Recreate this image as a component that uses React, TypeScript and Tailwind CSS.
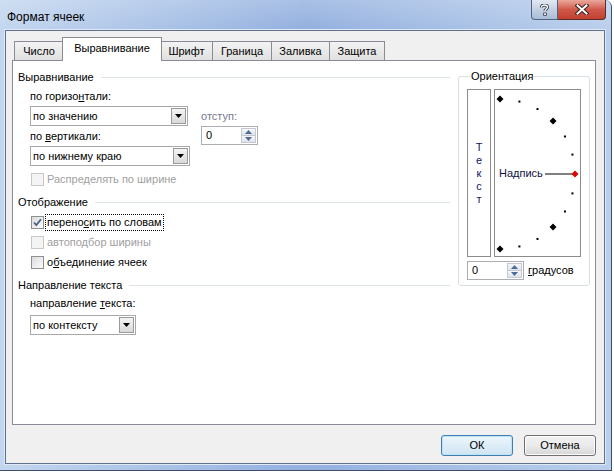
import React from 'react'

function Select({ value, className }: { value: string; className: string }) {
  return (
    <div className={`flex h-[20px] items-stretch border border-[#a9a9a9] bg-white ${className}`}>
      <div className="flex flex-1 items-center pl-[2px] leading-none">{value}</div>
      <div className="m-[1px] flex w-[15px] items-center justify-center border border-[#9a9a9a] bg-gradient-to-b from-[#f4f4f4] to-[#d9d9d9]">
        <svg width="7" height="4" viewBox="0 0 7 4">
          <path d="M0 0h7L3.5 4z" fill="#000" />
        </svg>
      </div>
    </div>
  )
}

function Spin({ value }: { value: string }) {
  return (
    <div className="flex h-[19px] w-[57px] items-stretch border border-[#abadb3] bg-white">
      <div className="flex flex-1 items-center pl-[4px] leading-none">{value}</div>
      <div className="m-[1px] flex w-[15px] flex-col">
        <div className="flex flex-1 items-center justify-center border border-[#c3c8d1] bg-gradient-to-b from-[#f6f7f9] to-[#dfe3ea]">
          <svg width="7" height="4" viewBox="0 0 7 4">
            <path d="M0 4h7L3.5 0z" fill="#4d6a9c" />
          </svg>
        </div>
        <div className="flex flex-1 items-center justify-center border border-t-0 border-[#c3c8d1] bg-gradient-to-b from-[#f6f7f9] to-[#dfe3ea]">
          <svg width="7" height="4" viewBox="0 0 7 4">
            <path d="M0 0h7L3.5 4z" fill="#4d6a9c" />
          </svg>
        </div>
      </div>
    </div>
  )
}

function Check({
  checked,
  disabled,
  focus,
  children,
}: {
  checked?: boolean
  disabled?: boolean
  focus?: boolean
  children: React.ReactNode
}) {
  return (
    <div className="flex h-[20px] items-center pl-[13px]">
      <div
        className={`flex h-[13px] w-[13px] items-center justify-center border ${
          disabled
            ? 'border-[#c8c8c8] bg-[#f4f4f4]'
            : 'border-[#8e8f8f] bg-gradient-to-br from-[#dcdcdc] to-[#fbfbfb]'
        }`}
      >
        {checked && (
          <svg width="9" height="9" viewBox="0 0 9 9">
            <path d="M1 4.5l2.3 2.6L8 1.2" fill="none" stroke="#4a5f8e" strokeWidth="1.8" />
          </svg>
        )}
      </div>
      <div
        className={`ml-[1px] px-[1px] leading-[15px] ${disabled ? 'text-[#a0a0a0]' : 'text-black'} ${
          focus ? 'border border-dotted border-black' : 'border border-transparent'
        }`}
      >
        {children}
      </div>
    </div>
  )
}

function Header({ children }: { children: React.ReactNode }) {
  return (
    <div className="flex h-[18px] items-center pr-[8px]">
      <span>{children}</span>
      <div className="ml-[7px] h-px flex-1 bg-[#dde3ea]" />
    </div>
  )
}

const tabs = ['Число', 'Выравнивание', 'Шрифт', 'Граница', 'Заливка', 'Защита']
const tabWidths = ['w-[50px]', 'w-[100px]', 'w-[53px]', 'w-[60px]', 'w-[59px]', 'w-[56px]']

function Dial() {
  const cx = 5
  const cy = 84
  const r = 75
  const marks = [90, 75, 60, 45, 30, 15, 0, -15, -30, -45, -60, -75, -90]
  return (
    <svg className="absolute inset-0" width="85" height="166" viewBox="0 0 85 166">
      <line x1="50" y1={cy} x2="79" y2={cy} stroke="#000" strokeWidth="1" />
      {marks.map((a) => {
        const x = cx + r * Math.cos((a * Math.PI) / 180)
        const y = cy - r * Math.sin((a * Math.PI) / 180)
        if (a % 45 === 0) {
          const d = 3.5
          return (
            <path
              key={a}
              d={`M${x} ${y - d}L${x + d} ${y}L${x} ${y + d}L${x - d} ${y}Z`}
              fill={a === 0 ? '#e00000' : '#000'}
            />
          )
        }
        return <rect key={a} x={x - 1} y={y - 1} width="2" height="2" fill="#000" />
      })}
    </svg>
  )
}

export default function App() {
  return (
    <div className="h-[472px] w-[614px] overflow-hidden bg-white font-['Liberation_Sans',Arial,sans-serif] text-[11px] text-black">
      <div className="flex h-[471px] w-[612px] flex-col rounded-tr-[7px] border-r border-b border-[#3f4d66] bg-gradient-to-r from-[#c3d6ef] via-[#93b0df] to-[#bacfec]">
        {/* title bar */}
        <div className="flex h-[30px] items-start bg-gradient-to-b from-white/20 to-transparent">
          <div className="pl-[7px] pt-[10px] text-[12px] leading-[15px]">Формат ячеек</div>
          <div className="ml-auto mr-[5px] flex h-[20px]">
            <div className="flex w-[27px] items-center justify-center rounded-bl-[4px] border border-t-0 border-[#50637f] bg-gradient-to-b from-[#e2e9f3] via-[#c4d1e3] to-[#a9bcd6]">
              <svg width="9" height="12" viewBox="0 0 9 12">
                <path
                  d="M1.5 3.5C1.5 1.5 3 1 4.5 1S7.5 1.8 7.5 3.3 5 5.3 5 7"
                  fill="none"
                  stroke="#334"
                  strokeWidth="3"
                />
                <path
                  d="M1.5 3.5C1.5 1.5 3 1 4.5 1S7.5 1.8 7.5 3.3 5 5.3 5 7"
                  fill="none"
                  stroke="#fff"
                  strokeWidth="1.4"
                />
                <rect x="3.3" y="8.6" width="3.4" height="3.2" fill="#334" />
                <rect x="4.1" y="9.3" width="1.8" height="1.8" fill="#fff" />
              </svg>
            </div>
            <div className="flex w-[48px] items-center justify-center rounded-br-[4px] border border-t-0 border-l-0 border-[#5a2d2a] bg-gradient-to-b from-[#e9a99c] via-[#d0584a] to-[#c1402f]">
              <svg width="14" height="11" viewBox="0 0 14 11">
                <path d="M2.5 1.5l9 8M11.5 1.5l-9 8" stroke="#3a2020" strokeWidth="4" strokeLinecap="square" />
                <path d="M2.5 1.5l9 8M11.5 1.5l-9 8" stroke="#fff" strokeWidth="2" strokeLinecap="square" />
              </svg>
            </div>
          </div>
        </div>

        {/* client area */}
        <div className="mb-[6px] ml-[5px] mr-[6px] flex flex-1 flex-col border border-[#61718b] bg-[#f0f0f0] pt-[6px] shadow-[0_0_0_1px_#dfe8f5]">
          {/* tabs */}
          <div className="ml-[8px] flex h-[23px] items-end">
            {tabs.map((t, i) =>
              i === 1 ? (
                <div
                  key={t}
                  className={`relative z-10 -mx-[2px] -mb-px flex h-[24px] items-center justify-center border border-b-0 border-[#898c95] bg-white pb-[3px] ${tabWidths[i]}`}
                >
                  {t}
                </div>
              ) : (
                <div
                  key={t}
                  className={`flex h-[19px] items-center justify-center border border-b-0 border-[#898c95] bg-gradient-to-b from-[#f3f3f3] to-[#e0e0e0] ${
                    i > 2 ? '-ml-px' : ''
                  } ${tabWidths[i]}`}
                >
                  {t}
                </div>
              ),
            )}
          </div>

          {/* panel */}
          <div className="ml-[6px] mr-[8px] flex h-[365px] border border-[#898c95] bg-white">
            {/* left column */}
            <div className="flex w-[445px] flex-col pl-[5px] pt-[7px]">
              <Header>Выравнивание</Header>
              <div className="flex">
                <div className="flex flex-col pl-[12px]">
                  <div className="flex h-[20px] items-center">
                    <span>
                      по горизо<span className="underline">н</span>тали:
                    </span>
                  </div>
                  <Select value="по значению" className="w-[158px]" />
                  <div className="flex h-[20px] items-center">
                    <span>
                      по <span className="underline">в</span>ертикали:
                    </span>
                  </div>
                  <Select value="по нижнему краю" className="w-[160px]" />
                </div>
                <div className="ml-[11px] flex flex-col pt-[21px]">
                  <div className="flex h-[19px] items-center text-[#76768e]">отступ:</div>
                  <Spin value="0" />
                </div>
              </div>
              <div className="mt-[3px]">
                <Check disabled>Распределять по ширине</Check>
              </div>
              <div className="mt-[4px]">
                <Header>Отображение</Header>
              </div>
              <div className="mt-[1px]">
                <Check checked focus>
                  перено<span className="underline">с</span>ить по словам
                </Check>
                <Check disabled>автоподбор ширины</Check>
                <Check>
                  о<span className="underline">б</span>ъединение ячеек
                </Check>
              </div>
              <div className="mt-[4px]">
                <Header>Направление текста</Header>
              </div>
              <div className="flex h-[18px] items-center pl-[12px]">
                <span>
                  направление <span className="underline">т</span>екста:
                </span>
              </div>
              <div className="mt-[3px] pl-[12px]">
                <Select value="по контексту" className="w-[106px]" />
              </div>
            </div>

            {/* orientation */}
            <div className="pt-[8px]">
              <fieldset className="h-[217px] w-[130px] rounded-[3px] border border-[#d5dfe5] px-[8px]">
                <legend className="ml-[3px] px-[1px] leading-[14px]">Ориентация</legend>
                <div className="mt-[6px] flex gap-[3px]">
                  <div className="flex h-[168px] w-[24px] flex-col items-center justify-center border border-[#8c8c8c] leading-[13px] text-[#141464]">
                    <span>Т</span>
                    <span>е</span>
                    <span>к</span>
                    <span>с</span>
                    <span>т</span>
                  </div>
                  <div className="relative flex h-[168px] w-[87px] items-center border border-[#8c8c8c] pl-[4px]">
                    <Dial />
                    <span className="relative text-[#101040]">Надпись</span>
                  </div>
                </div>
                <div className="mt-[4px] flex items-center gap-[4px]">
                  <Spin value="0" />
                  <span>
                    <span className="underline">г</span>радусов
                  </span>
                </div>
              </fieldset>
            </div>
          </div>

          {/* buttons */}
          <div className="mr-[8px] mt-[10px] flex justify-end gap-[11px]">
            <button className="h-[21px] w-[72px] rounded-[3px] border border-[#3c7fb1] bg-gradient-to-b from-[#ecf6fc] to-[#cfe5f3] shadow-[inset_0_0_0_1px_#bfe2f7]">
              ОК
            </button>
            <button className="h-[21px] w-[72px] rounded-[3px] border border-[#707070] bg-gradient-to-b from-[#f2f2f2] via-[#ebebeb] to-[#d6d6d6] shadow-[inset_0_0_0_1px_#fcfcfc]">
              Отмена
            </button>
          </div>
        </div>
      </div>
    </div>
  )
}
